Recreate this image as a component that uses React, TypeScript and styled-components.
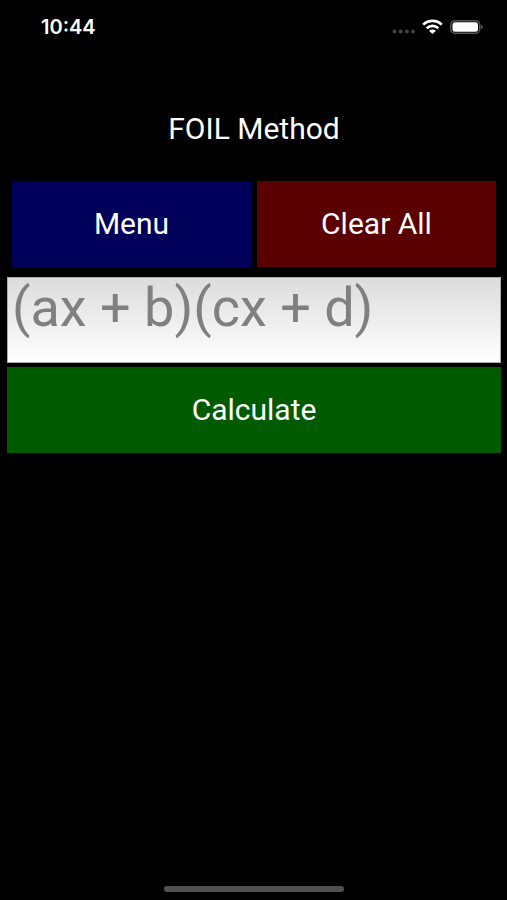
import React, { useState } from "react";
import styled, { createGlobalStyle } from "styled-components";

const GlobalStyle = createGlobalStyle`
  * { box-sizing: border-box; }
  body { margin: 0; background: #000; }
`;

const Screen = styled.div`
  min-height: 100vh;
  display: flex;
  flex-direction: column;
  background: #000;
  color: #fff;
  font-family: Roboto, sans-serif;
`;

const StatusBar = styled.header`
  display: flex;
  align-items: center;
  justify-content: space-between;
  height: 54px;
  padding: 0 23px 0 41px;
`;

const Clock = styled.time`
  font: 600 20px/24px Inter, sans-serif;
`;

const StatusIcons = styled.div`
  display: flex;
  align-items: center;
  gap: 7px;

  svg { display: block; }
`;

const Main = styled.main`
  flex: 1;
  display: flex;
  flex-direction: column;
  padding: 0 6px 0 7px;
`;

const Title = styled.h1`
  margin: 55px 0 32px;
  font-size: 30px;
  font-weight: 400;
  line-height: 40px;
  text-align: center;
`;

const ButtonRow = styled.div`
  display: grid;
  grid-template-columns: 1fr 1fr;
  gap: 6px;
  padding: 0 5px;
`;

const ActionButton = styled.button<{ $color: string }>`
  height: 86px;
  border: 0;
  border-radius: 0;
  padding: 0;
  background: ${({ $color }) => $color};
  color: #fff;
  font: 400 30px/36px Roboto, sans-serif;
  cursor: pointer;
`;

const Expression = styled.textarea`
  display: block;
  width: 100%;
  height: 86px;
  margin: 10px 0 4px;
  padding: 0 4px;
  border: 1px solid #aaa;
  border-radius: 0;
  outline: 0;
  resize: none;
  overflow: hidden;
  background: linear-gradient(#dcdcdc, #fff);
  color: #111;
  font: 400 54px/60px Roboto, sans-serif;

  &::placeholder { color: #808080; opacity: 1; }
`;

const HomeIndicator = styled.div`
  width: 180px;
  height: 6px;
  margin: 0 auto 8px;
  border-radius: 3px;
  background: #515151;
`;

const SignalIcon = () => (
  <svg width="23" height="16" viewBox="0 0 23 16" fill="#444" aria-hidden="true">
    <circle cx="2.5" cy="12.5" r="1.9" />
    <circle cx="8.7" cy="12.5" r="1.9" />
    <circle cx="14.9" cy="12.5" r="1.9" />
    <circle cx="21" cy="12.5" r="1.9" />
  </svg>
);

const WifiIcon = () => (
  <svg width="21" height="16" viewBox="0 0 21 16" fill="none" stroke="#fff" strokeWidth="2.6" aria-hidden="true">
    <path d="M1.2 5.6C6.5.6 14.5.6 19.8 5.6" />
    <path d="M4.7 9.2c3.4-3.1 8.2-3.1 11.6 0" />
    <path d="M7 11.8c2.1-1.8 4.9-1.8 7 0L10.5 15z" fill="#fff" stroke="none" />
  </svg>
);

const BatteryIcon = () => (
  <svg width="34" height="14" viewBox="0 0 34 14" aria-hidden="true">
    <rect x="0.75" y="0.75" width="29" height="12.5" rx="4" fill="none" stroke="#555" strokeWidth="1.5" />
    <rect x="2.5" y="2.3" width="25.5" height="9.4" rx="2.3" fill="#fff" />
    <path d="M31.2 4.8c2 .7 2 3.7 0 4.4z" fill="#666" />
  </svg>
);

export default function App() {
  const [expression, setExpression] = useState("");

  return (
    <Screen>
      <GlobalStyle />
      <StatusBar>
        <Clock>10:44</Clock>
        <StatusIcons>
          <SignalIcon />
          <WifiIcon />
          <BatteryIcon />
        </StatusIcons>
      </StatusBar>
      <Main>
        <Title>FOIL Method</Title>
        <ButtonRow>
          <ActionButton type="button" $color="#00005a">Menu</ActionButton>
          <ActionButton type="button" $color="#5a0000" onClick={() => setExpression("")}>
            Clear All
          </ActionButton>
        </ButtonRow>
        <Expression
          aria-label="Expression"
          placeholder="(ax + b)(cx + d)"
          value={expression}
          onChange={(event) => setExpression(event.target.value)}
        />
        <ActionButton type="button" $color="#005a00">Calculate</ActionButton>
      </Main>
      <HomeIndicator />
    </Screen>
  );
}
